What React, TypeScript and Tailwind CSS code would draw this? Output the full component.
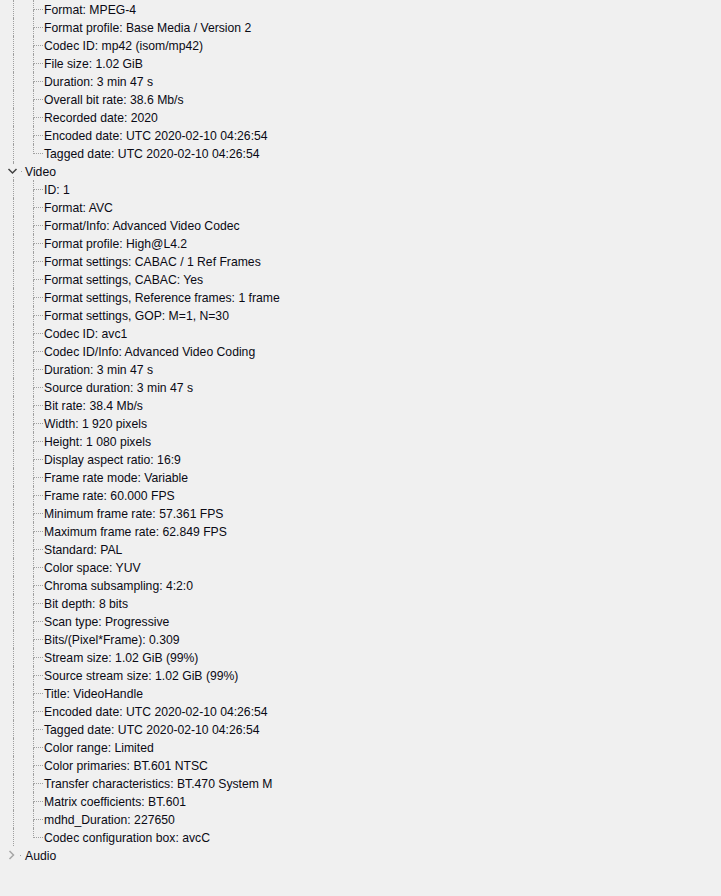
import React from "react";

const general = [
  "Format: MPEG-4",
  "Format profile: Base Media / Version 2",
  "Codec ID: mp42 (isom/mp42)",
  "File size: 1.02 GiB",
  "Duration: 3 min 47 s",
  "Overall bit rate: 38.6 Mb/s",
  "Recorded date: 2020",
  "Encoded date: UTC 2020-02-10 04:26:54",
  "Tagged date: UTC 2020-02-10 04:26:54",
];

const video = [
  "ID: 1",
  "Format: AVC",
  "Format/Info: Advanced Video Codec",
  "Format profile: High@L4.2",
  "Format settings: CABAC / 1 Ref Frames",
  "Format settings, CABAC: Yes",
  "Format settings, Reference frames: 1 frame",
  "Format settings, GOP: M=1, N=30",
  "Codec ID: avc1",
  "Codec ID/Info: Advanced Video Coding",
  "Duration: 3 min 47 s",
  "Source duration: 3 min 47 s",
  "Bit rate: 38.4 Mb/s",
  "Width: 1 920 pixels",
  "Height: 1 080 pixels",
  "Display aspect ratio: 16:9",
  "Frame rate mode: Variable",
  "Frame rate: 60.000 FPS",
  "Minimum frame rate: 57.361 FPS",
  "Maximum frame rate: 62.849 FPS",
  "Standard: PAL",
  "Color space: YUV",
  "Chroma subsampling: 4:2:0",
  "Bit depth: 8 bits",
  "Scan type: Progressive",
  "Bits/(Pixel*Frame): 0.309",
  "Stream size: 1.02 GiB (99%)",
  "Source stream size: 1.02 GiB (99%)",
  "Title: VideoHandle",
  "Encoded date: UTC 2020-02-10 04:26:54",
  "Tagged date: UTC 2020-02-10 04:26:54",
  "Color range: Limited",
  "Color primaries: BT.601 NTSC",
  "Transfer characteristics: BT.470 System M",
  "Matrix coefficients: BT.601",
  "mdhd_Duration: 227650",
  "Codec configuration box: avcC",
];

const Leaf = ({ label, last }: { label: string; last: boolean }) => (
  <div className="flex h-[18px]">
    <div className="w-[13px]" />
    <div className="w-[20px] border-l border-dotted border-[#a0a0a0]" />
    <div className="flex w-[10px] flex-col">
      <div className="h-[10px] border-l border-b border-dotted border-[#a0a0a0]" />
      {!last && <div className="h-[8px] border-l border-dotted border-[#a0a0a0]" />}
    </div>
    <div className="pl-px pt-px leading-[18px] whitespace-nowrap">{label}</div>
  </div>
);

const Node = ({ label, open }: { label: string; open: boolean }) => (
  <div className="flex h-[18px]">
    <div className="w-[13px]" />
    <div className={`relative w-[12px] ${open ? "border-l border-dotted border-[#a0a0a0]" : ""}`}>
      <svg className="absolute left-[-7px] top-[3px]" width="12" height="12" viewBox="0 0 12 12">
        <rect x="0" y="0" width="12" height="12" fill="#f0f0f0" />
        {open ? (
          <path d="M1.5 4 L5.5 8 L9.5 4" fill="none" stroke="#404040" strokeWidth="1.5" />
        ) : (
          <path d="M3.5 2 L7.5 6 L3.5 10" fill="none" stroke="#a6a6a6" strokeWidth="1.5" />
        )}
      </svg>
      <div className="absolute left-[7px] top-[9px] h-px w-px bg-[#a0a0a0]" />
    </div>
    <div className="pt-px leading-[18px] whitespace-nowrap">{label}</div>
  </div>
);

export default function App() {
  return (
    <div
      className="h-[896px] w-full overflow-hidden bg-[#f0f0f0] text-[12.2px] text-[#0a0a14]"
      style={{ fontFamily: '"Liberation Sans", Arial, sans-serif' }}
    >
      {general.map((g, i) => (
        <Leaf key={"g" + i} label={g} last={i === general.length - 1} />
      ))}
      <Node label="Video" open />
      {video.map((v, i) => (
        <Leaf key={"v" + i} label={v} last={i === video.length - 1} />
      ))}
      <Node label="Audio" open={false} />
    </div>
  );
}
